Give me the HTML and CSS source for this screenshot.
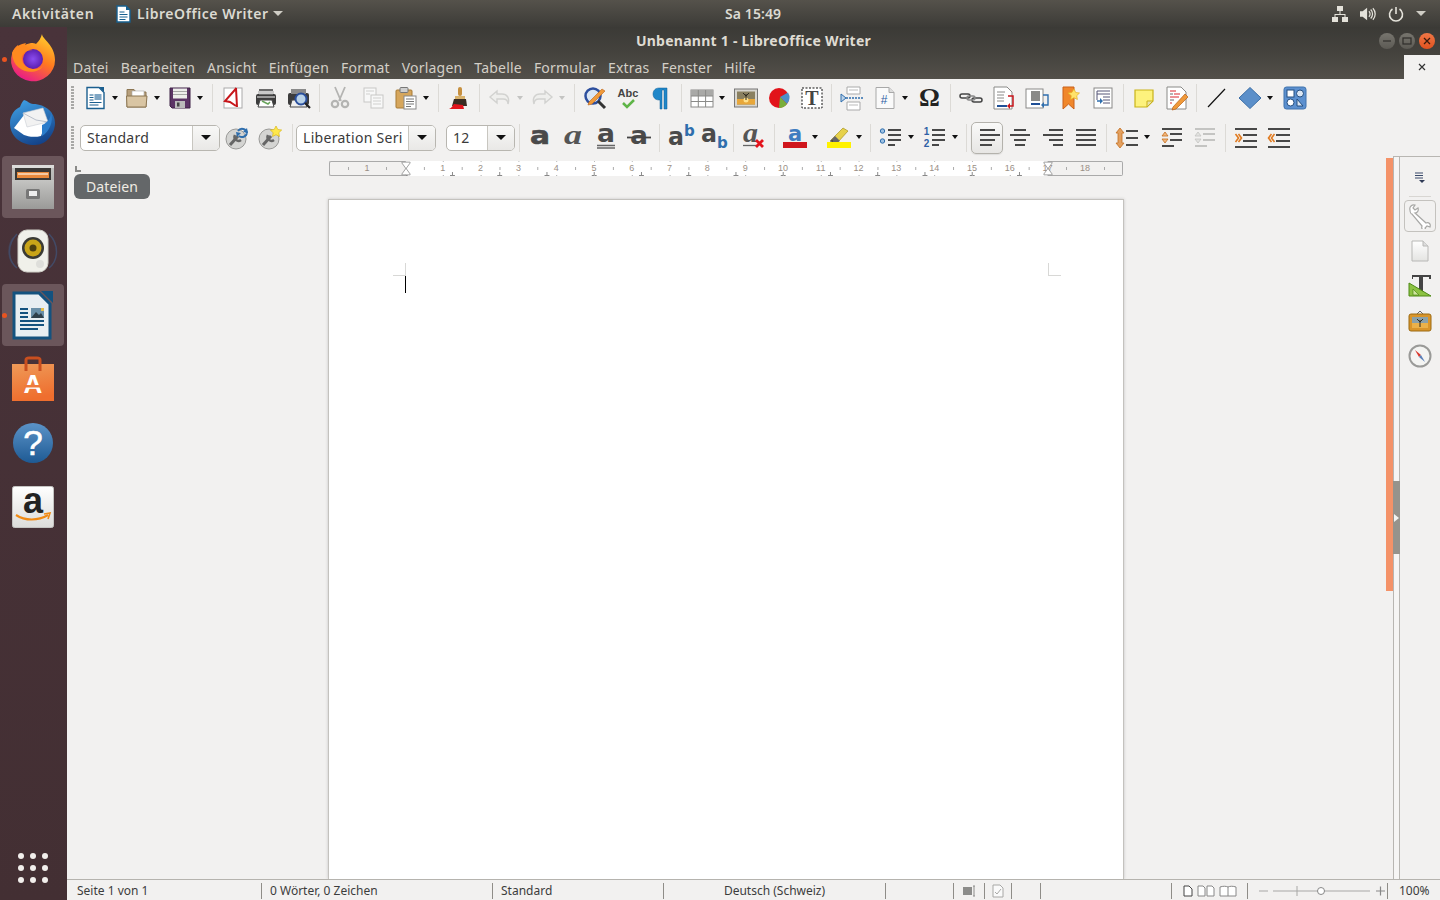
FILE: index.html
```html
<!DOCTYPE html>
<html lang="de">
<head>
<meta charset="utf-8">
<title>Unbenannt 1 - LibreOffice Writer</title>
<link rel="stylesheet" href="styles.css">
</head>
<body>
<header class="panel">
  <div class="panel-left">
    <span class="activities">Aktivitäten</span>
    <span class="appname">
      <svg width="16" height="18" viewBox="0 0 16 18"><path d="M2 1h9l4 4v12H2z" fill="#fff" stroke="#17608f" stroke-width="1.4"/><path d="M11 1v4h4z" fill="#17608f"/><path d="M4.5 7h5M4.5 9.5h8M4.5 12h8M4.5 14.500h6" stroke="#17608f"/></svg>
      LibreOffice Writer<i class="caret"></i>
    </span>
  </div>
  <div class="clock">Sa 15:49</div>
  <div class="panel-right">
    <svg width="16" height="16" viewBox="0 0 16 16" fill="#e4e2da"><rect x="5" y="0" width="6" height="5"/><rect x="0" y="11" width="6" height="5"/><rect x="10" y="11" width="6" height="5"/><path d="M7.500 5h1v3H13.500v3h-1V9h-9v2h-1V8h5z"/></svg>
    <svg width="16" height="16" viewBox="0 0 18 16"><path d="M0 5h3l5-4v14l-5-4H0z" fill="#e4e2da"/><path d="M10 5a4 4 0 0 1 0 6M12 3a7 7 0 0 1 0 10M14.500 1.500a9.500 9.500 0 0 1 0 13" fill="none" stroke="#e4e2da" stroke-width="1.400"/></svg>
    <svg width="16" height="16" viewBox="0 0 16 16" fill="none" stroke="#e4e2da" stroke-width="1.600"><path d="M8 1v7"/><path d="M4.500 3a6.500 6.500 0 1 0 7 0"/></svg>
    <i class="caret wide"></i>
  </div>
</header>

<div class="desktop">
  <nav class="dock">
    <div class="dock-item running">
      <svg class="ff" width="48" height="48" viewBox="0 0 48 48"><defs><linearGradient id="ffa" x1="0.800" y1="0" x2="0.300" y2="1"><stop offset="0" stop-color="#ffd02e"/><stop offset="0.500" stop-color="#ff7a1f"/><stop offset="1" stop-color="#e8188c"/></linearGradient><radialGradient id="ffb"><stop offset="0" stop-color="#8a4cf0"/><stop offset="1" stop-color="#5b1fae"/></radialGradient></defs><path d="M33 1c0 5 13 11 13 26a22 21 0 1 1-43-6c1-4 3-7 6-9 0 2 1 4 2 5 2-4 6-6 11-7 2 0 4 0 5 1 3-3 5-6 6-10z" fill="url(#ffa)"/><circle cx="24" cy="26" r="10" fill="url(#ffb)"/><path d="M3 20c3-7 9-9 14-10-2 3 0 6 7 7-8 0-12 4-11 10 2 9 14 12 21 6-6 10-30 8-31-13z" fill="#ff8a1f"/></svg>
    </div>
    <div class="dock-item">
      <svg width="48" height="48" viewBox="0 0 48 48"><defs><linearGradient id="tb" x1="0.300" y1="0" x2="0.700" y2="1"><stop offset="0" stop-color="#3d9be0"/><stop offset="1" stop-color="#123f86"/></linearGradient></defs><path d="M15 1c4 1 6 4 9 4 13 0 22 9 22 19S38 46 26 46C12 46 1 38 1 24 1 16 6 10 11 8c1-3 2-5 4-7z" fill="url(#tb)"/><path d="M5 29 15 16l22 8-5 13c-8 2-14 0-17-1z" fill="#fff"/><path d="M14 14 34 9l5 14-21 5z" fill="#f2f2f2" stroke="#c8ccd4" stroke-width="0.600"/><path d="m14 14 13 7 12 2" fill="none" stroke="#aab2c0" stroke-width="0.800"/><path d="M33 26c6-2 9-8 9-13 3 10-2 20-9 24z" fill="#2b7ccb"/></svg>
    </div>
    <div class="dock-item active">
      <svg width="44" height="46" viewBox="0 0 44 46"><defs><linearGradient id="fi" x1="0" y1="0" x2="0" y2="1"><stop offset="0" stop-color="#c4c4c2"/><stop offset="1" stop-color="#9a9a98"/></linearGradient></defs><rect x="1" y="1" width="42" height="44" rx="2" fill="url(#fi)"/><rect x="1" y="1" width="42" height="3" fill="#dcdcda"/><rect x="4" y="4" width="36" height="14" fill="#3a3836"/><rect x="6" y="8" width="32" height="6" fill="#e8893c"/><path d="M7 10h30" stroke="#fbe6cf" stroke-width="1.400"/><rect x="1" y="16" width="42" height="29" fill="url(#fi)"/><rect x="15" y="25" width="14" height="10" rx="1.500" fill="#777"/><rect x="18" y="27" width="8" height="5" fill="#eee"/></svg>
    </div>
    <div class="dock-item">
      <svg width="50" height="46" viewBox="0 0 50 46"><g fill="none" stroke="#41557a" stroke-width="1.500" opacity="0.700"><path d="M9 6C-1 16-1 32 9 40"/><path d="M41 6c10 10 10 26 0 34"/><path d="M5 10C-1 18 0 30 5 36" opacity="0.500"/></g><rect x="10" y="2" width="30" height="42" rx="9" fill="#f0f0ea" stroke="#cfcfc7"/><circle cx="25" cy="20" r="11" fill="#3a3a34"/><circle cx="25" cy="20" r="8.500" fill="#c9a418"/><circle cx="25" cy="20" r="3.500" fill="#4d3f0f"/><circle cx="32" cy="36" r="4" fill="#dededa"/></svg>
    </div>
    <div class="dock-item active running">
      <svg width="42" height="50" viewBox="0 0 42 50"><path d="M2 3h25l11 11v34H2z" fill="#e8eef2" stroke="#14527f" stroke-width="3"/><path d="M29 1h12v12z" fill="#14527f"/><path d="M8 19h8M8 23h8M8 27h8M8 31h24M8 35h24M8 39h18" stroke="#14527f" stroke-width="2"/><rect x="19" y="18" width="13" height="10" fill="#6a8fa8"/><path d="m19 28 5-6 3 3 2-2 3 5z" fill="#2f3f4a"/><rect x="29" y="18" width="3" height="3" fill="#e5bd4c"/></svg>
    </div>
    <div class="dock-item">
      <svg width="42" height="44" viewBox="0 0 42 44"><defs><linearGradient id="bg" x1="0" y1="0" x2="0.200" y2="1"><stop offset="0" stop-color="#ee9a58"/><stop offset="1" stop-color="#ef6e2e"/></linearGradient></defs><rect x="0" y="7" width="42" height="37" fill="url(#bg)"/><path d="M14 14V3c0-2 1-2 3-2h8c2 0 3 0 3 2v11" fill="none" stroke="#c94f1f" stroke-width="3"/><text x="21" y="36" text-anchor="middle" class="bag-a">A</text><rect x="12" y="28" width="18" height="2.500" fill="#ef7a3a"/></svg>
    </div>
    <div class="dock-item">
      <svg width="42" height="42" viewBox="0 0 42 42"><defs><linearGradient id="hp" x1="0" y1="0" x2="0" y2="1"><stop offset="0" stop-color="#5b93c8"/><stop offset="1" stop-color="#1e5a94"/></linearGradient></defs><circle cx="21" cy="21" r="20" fill="url(#hp)"/><text x="21" y="33" text-anchor="middle" class="help-q">?</text></svg>
    </div>
    <div class="dock-item">
      <svg width="42" height="42" viewBox="0 0 42 42"><defs><linearGradient id="az" x1="0" y1="0" x2="0" y2="1"><stop offset="0" stop-color="#fff"/><stop offset="1" stop-color="#dcdcda"/></linearGradient></defs><rect x="0.500" y="0.500" width="41" height="41" rx="2" fill="url(#az)" stroke="#c4c4c2"/><text x="21" y="27" text-anchor="middle" class="amazon-a">a</text><path d="M4 29c9 6 22 6 32 0" fill="none" stroke="#f08a14" stroke-width="2.200"/><path d="m32 28 6-1-2 6" fill="none" stroke="#f08a14" stroke-width="1.600"/></svg>
    </div>
    <div class="app-grid"><i></i><i></i><i></i><i></i><i></i><i></i><i></i><i></i><i></i></div>
  </nav>

  <main class="window">
    <div class="titlebar">
      <span></span>
      <span class="title">Unbenannt 1 - LibreOffice Writer</span>
      <div class="controls">
        <span class="wbtn"><svg width="10" height="10" viewBox="0 0 10 10"><path d="M1 5h8" stroke="#2f2e2a" stroke-width="1.200"/></svg></span>
        <span class="wbtn"><svg width="10" height="10" viewBox="0 0 10 10"><rect x="1" y="2" width="8" height="6" fill="none" stroke="#2f2e2a" stroke-width="1.200"/></svg></span>
        <span class="wbtn close"><svg width="10" height="10" viewBox="0 0 10 10"><path d="m2 2 6 6M8 2 2 8" stroke="#3a1a0c" stroke-width="1.300"/></svg></span>
      </div>
    </div>
    <div class="menubar">
      <span>Datei</span><span>Bearbeiten</span><span>Ansicht</span><span>Einfügen</span><span>Format</span><span>Vorlagen</span><span>Tabelle</span><span>Formular</span><span>Extras</span><span>Fenster</span><span>Hilfe</span>
      <div class="doc-close"><svg width="8" height="8" viewBox="0 0 8 8"><path d="m1 1 6 6M7 1 1 7" stroke="#333" stroke-width="1.200"/></svg></div>
    </div>

    <div class="toolbar">
      <i class="grip"></i>
      <span class="btn"><svg class="ic" viewBox="0 0 24 24"><path d="M4 1.500h12l5 5v16H4z" fill="#fff" stroke="#1b5f8f" stroke-width="1.400"/><path d="M16 1h5v5z" fill="#1b5f8f"/><path d="M6.500 9h4M6.500 11.500h4M6.500 14h4M6.500 16.500h12M6.500 19h9" stroke="#1b5f8f"/><rect x="11.500" y="8" width="7" height="6" fill="#7fa6c4"/></svg></span><i class="dd w9"></i>
      <span class="btn"><svg class="ic" viewBox="0 0 24 24"><path d="M2 6V3.500h7L11 6h10v15H2z" fill="#b79f7c" stroke="#8c7653"/><rect x="7" y="5" width="12" height="6" fill="#fff" stroke="#aaa" stroke-width="0.600"/><path d="M1.500 10H22l-1 11H2z" fill="#d9c5a3" stroke="#8c7653"/></svg></span><i class="dd"></i>
      <span class="btn"><svg class="ic" viewBox="0 0 24 24"><path d="M2 2h20v20H4l-2-2z" fill="#5c3566" stroke="#3f2347"/><rect x="5" y="2.500" width="14" height="10" fill="#eeeeec"/><path d="M5 5.500h14M5 8.500h14" stroke="#a8a8a8"/><rect x="7" y="15" width="10" height="7" fill="#bbb"/><rect x="9" y="16.500" width="2.500" height="4" fill="#444"/></svg></span><i class="dd"></i>
      <i class="sep s10"></i>
      <span class="btn"><svg class="ic" viewBox="0 0 24 24"><rect x="3" y="2" width="18" height="20" fill="#fff" stroke="#aaa"/><path d="M15.500 2 4 15l5 1 6 4M15 2l1 19" fill="none" stroke="#c7161b" stroke-width="2"/></svg></span>
      <span class="btn"><svg class="ic" viewBox="0 0 24 24"><rect x="2" y="8" width="20" height="11" rx="2" fill="#3c3c3c"/><rect x="5" y="3" width="14" height="6" fill="#6b6b6b"/><rect x="4" y="5" width="16" height="3" fill="#c8c8c8"/><rect x="3" y="10" width="18" height="2" fill="#9a9a9a"/><path d="M6 14h12l2 7H4z" fill="#fff" stroke="#444"/><path d="m8 15 6 3 2-2" stroke="#69a35b" stroke-width="1.500" fill="none"/></svg></span>
      <span class="btn"><svg class="ic" viewBox="0 0 24 24"><rect x="1" y="7" width="21" height="12" rx="2" fill="#3c3c3c"/><rect x="4" y="3" width="15" height="5" fill="#8a8a8a"/><path d="M5 14h13l2 7H3z" fill="#eee" stroke="#444"/><circle cx="14" cy="13" r="5.500" fill="#b9d2e8" stroke="#2a4f9c" stroke-width="2"/><path d="m18 17 5 5" stroke="#222" stroke-width="2.200"/></svg></span>
      <i class="sep"></i>
      <span class="btn off"><svg class="ic" viewBox="0 0 24 24" fill="none" stroke="#b4b4b2"><path d="M7 1l6 14M17 1l-6 14" stroke-width="1.800"/><circle cx="7" cy="18" r="3.200" stroke-width="2.200"/><circle cx="17" cy="18" r="3.200" stroke-width="2.200"/></svg></span>
      <span class="btn off"><svg class="ic" viewBox="0 0 24 24"><rect x="3" y="2" width="12" height="14" fill="#f8f8f8" stroke="#c8c8c6"/><rect x="10" y="9" width="12" height="13" fill="#f8f8f8" stroke="#c8c8c6"/><path d="M5 5h8M5 8h4M12 12h8M12 15h8M12 18h8" stroke="#d0d0ce"/></svg></span>
      <span class="btn"><svg class="ic" viewBox="0 0 24 24"><rect x="2" y="4" width="16" height="18" rx="1" fill="#d6a65c" stroke="#a77a34"/><rect x="6" y="1.500" width="8" height="5" rx="1" fill="#cfcfcf" stroke="#777"/><rect x="10" y="10" width="12" height="13" fill="#fff" stroke="#888"/><path d="M12 13h8M12 15.500h8M12 18h8M12 20.500h5" stroke="#777"/></svg></span><i class="dd"></i>
      <i class="sep s10"></i>
      <span class="btn"><svg class="ic" viewBox="0 0 24 24"><rect x="11" y="1" width="4" height="9" rx="2" fill="#c7903f"/><rect x="8" y="10" width="10" height="3" fill="#d9b36e"/><path d="M7 13h12l1 7H5z" fill="#3a2c22"/><path d="M2 23c3-1 4-4 5-5l9 1 1 4z" fill="#e3141c"/></svg></span>
      <i class="sep"></i>
      <span class="btn off"><svg class="ic" viewBox="0 0 24 24"><path d="M9 5 2 11l7 6v-4h6c3 0 5 2 5 5 2-6-1-10-6-10H9z" fill="#efefed" stroke="#d2d2d0" stroke-width="1.400"/></svg></span><i class="dd w9 faint"></i>
      <span class="btn off"><svg class="ic" viewBox="0 0 24 24"><path d="m15 5 7 6-7 6v-4H9c-3 0-5 2-5 5-2-6 1-10 6-10h5z" fill="#efefed" stroke="#d2d2d0" stroke-width="1.400"/></svg></span><i class="dd w9 faint"></i>
      <i class="sep s12"></i>
      <span class="btn"><svg class="ic" viewBox="0 0 24 24"><circle cx="10" cy="10" r="7.500" fill="#dbe6f3" stroke="#2d4f9e" stroke-width="2.500"/><path d="m15 15 7 7" stroke="#333" stroke-width="3"/><path d="M6 16 19 3l3 2L9 18l-4 1z" fill="#f09a3a" stroke="#b85f16" stroke-width="0.600"/></svg></span>
      <span class="btn"><svg class="ic" viewBox="0 0 24 24"><text x="12" y="11" text-anchor="middle" class="abc">Abc</text><path d="m7 17 4 4 7-7" fill="none" stroke="#5fb548" stroke-width="2.500"/></svg></span>
      <span class="btn"><svg class="ic" viewBox="0 0 24 24"><path d="M17 2H10C6 2 4 5 4 8s2 6 6 6h1v9h2V4h2v19h3V2z" fill="#1f87c9" stroke="#0e5e96" stroke-width="0.500"/></svg></span>
      <i class="sep"></i>
      <span class="btn"><svg class="ic" viewBox="0 0 24 24"><rect x="1" y="4" width="22" height="17" fill="#fff" stroke="#8a8a88"/><rect x="1" y="4" width="22" height="6" fill="#a9a9a7"/><path d="M1 10h22M1 15.500h22M8.300 4v17M15.600 4v17" stroke="#8a8a88"/></svg></span><i class="dd w11"></i>
      <span class="btn"><svg class="ic" viewBox="0 0 24 24"><rect x="0.500" y="3" width="23" height="18" fill="#d8d6d0" stroke="#777"/><rect x="3" y="5.500" width="18" height="13" fill="#8a8060"/><path d="M3 13h18v5.500H3z" fill="#e8a73a"/><circle cx="12" cy="14" r="2.500" fill="#ffe08a"/><path d="M12 14V8M12 10l-3-3M12 10l3-3" stroke="#2f2a20"/></svg></span>
      <span class="btn"><svg class="ic" viewBox="0 0 24 24"><circle cx="12" cy="12" r="10" fill="#e2141a"/><path d="M13 11 21 6.500A10 10 0 0 1 20 18z" fill="#4f8fc8"/><path d="M13 11 20 18A10 10 0 0 1 12 22z" fill="#78ae3a"/></svg></span>
      <span class="btn"><svg class="ic" viewBox="0 0 24 24"><rect x="2" y="2" width="20" height="20" fill="#fff" stroke="#111" stroke-dasharray="2 1.500"/><text x="12" y="19" text-anchor="middle" class="tbox">T</text></svg></span>
      <i class="sep s7"></i>
      <span class="btn"><svg class="ic" viewBox="0 0 24 24"><path d="M7 1h13v7H7zM7 16h13v8H7z" fill="#fff" stroke="#aaa"/><path d="M9 4h9M9 19h9" stroke="#bbb"/><path d="M6 12h17" stroke="#2f6ead" stroke-dasharray="2 1" stroke-width="1.500"/><path d="m1 8 5 4-5 4z" fill="#bcd2e8" stroke="#2f6ead"/></svg></span>
      <span class="btn"><svg class="ic" viewBox="0 0 24 24"><path d="M3 1.500h13l5 5v16H3z" fill="#fafafa" stroke="#a8a8a8"/><path d="M16 1.500v5h5" fill="#ddd" stroke="#a8a8a8"/><text x="11" y="18" text-anchor="middle" class="hash">#</text></svg></span><i class="dd w12"></i>
      <span class="btn"><span class="omega">Ω</span></span>
      <i class="sep"></i>
      <span class="btn"><svg class="ic" viewBox="0 0 24 24" fill="none" stroke="#444" stroke-width="1.500"><rect x="1" y="8" width="10" height="4" rx="2"/><rect x="13" y="12" width="10" height="4" rx="2"/><rect x="8" y="10" width="8" height="4" rx="2" stroke="#888"/></svg></span>
      <span class="btn"><svg class="ic" viewBox="0 0 24 24"><path d="M2 1h13l5 5v17H2z" fill="#fff" stroke="#8a8a88"/><path d="M5 6h8M5 9h7M5 12h7M5 15h7" stroke="#8a8a88"/><path d="M5 20h10" stroke="#1f4f96" stroke-width="2"/><path d="M16 10h5v10h-3" fill="none" stroke="#c7161b" stroke-width="1.500"/><path d="m18 17-3 3 3 3z" fill="#c7161b"/></svg></span>
      <span class="btn"><svg class="ic" viewBox="0 0 24 24"><rect x="1" y="3" width="17" height="19" fill="#fff" stroke="#8a8a88"/><rect x="6" y="5" width="9" height="10" fill="#8a8a88"/><path d="M6 18h9" stroke="#1f4f96" stroke-width="2"/><path d="M18 9h5v10h-5" fill="none" stroke="#2f6ead" stroke-width="1.400"/><path d="m19 16-3 3 3 3z" fill="#2f6ead"/></svg></span>
      <span class="btn"><svg class="ic" viewBox="0 0 24 24"><path d="M5 1h11v22l-5.500-5L5 23z" fill="#f0872b" stroke="#c9611a"/><path d="m16 3 1.700 3.500 3.800.5-2.800 2.700.7 3.800-3.400-1.800-3.400 1.800.7-3.800L10 7l3.800-.5z" fill="#ffe36a" stroke="#e5b01c" stroke-width="0.700"/></svg></span>
      <span class="btn"><svg class="ic" viewBox="0 0 24 24"><rect x="3" y="2" width="18" height="20" fill="#fff" stroke="#8a8a88"/><path d="M6 5h13M6 8h13M12 11h7M12 14h7M12 17h7M6 5v9" stroke="#557"/><path d="M6 15h5" stroke="#2f6ead" stroke-width="1.500"/><path d="m9 12 3 3-3 3z" fill="#2f6ead"/></svg></span>
      <i class="sep"></i>
      <span class="btn"><svg class="ic" viewBox="0 0 24 24"><path d="M3 4h18v11l-6 6H3z" fill="#fdf27d" stroke="#c9b31a" stroke-width="1.200"/><path d="M21 15h-6v6z" fill="#e8e1a8" stroke="#c9b31a"/></svg></span>
      <span class="btn"><svg class="ic" viewBox="0 0 24 24"><path d="M2 1h14l5 5v17H2z" fill="#fff" stroke="#8a8a88"/><path d="M5 5h6M9 8h6M5 11h9M5 17h2" stroke="#d9262c"/><path d="M5 8h3M5 14h4" stroke="#666"/><path d="M8 21 20 8l3 3-12 12-4 1z" fill="#f09a3a" stroke="#b85f16" stroke-width="0.700"/></svg></span>
      <i class="sep s7"></i>
      <span class="btn"><svg class="ic" viewBox="0 0 24 24"><path d="m3 21 17-18" stroke="#111" stroke-width="1.200"/></svg></span>
      <span class="btn"><svg class="ic" viewBox="0 0 24 24"><path d="M12 1.500 23 12 12 22.500 1 12z" fill="#5b8fc9" stroke="#3b6ea6"/></svg></span><i class="dd w12"></i>
      <span class="btn"><svg class="ic" viewBox="0 0 24 24"><rect x="1" y="1" width="22" height="22" rx="2.500" fill="#5c90cf" stroke="#3f72ad"/><rect x="4" y="4" width="7" height="7" fill="#fff" stroke="#234e80"/><circle cx="17" cy="7.500" r="3.500" fill="#dbe6f3" stroke="#234e80"/><circle cx="7.500" cy="16.500" r="3.500" fill="#fff" stroke="#234e80"/><path d="M14 20V13l6 7z" fill="#dbe6f3" stroke="#234e80"/></svg></span>
    </div>

    <div class="toolbar row2">
      <i class="grip g2"></i>
      <div class="combo c-style"><span class="combo-text">Standard</span><span class="combo-arrow"><i></i></span></div>
      <span class="btn"><svg class="ic" viewBox="0 0 24 24"><circle cx="11" cy="13" r="10" fill="#d4d4d2" stroke="#9a9a98"/><path d="m5 19 8-9" stroke="#666" stroke-width="3"/><path d="M10 9a4 4 0 0 0 6 5" stroke="#666" stroke-width="2.500" fill="none"/><path d="M13 5a5 5 0 0 1 9 2M22 7a5 5 0 0 1-8 3" fill="none" stroke="#2f6ead" stroke-width="2"/><path d="m22 2 1 5-5-1zM12 11l-1-5 5 1z" fill="#2f6ead"/></svg></span>
      <span class="btn"><svg class="ic" viewBox="0 0 24 24"><circle cx="11" cy="13" r="10" fill="#d4d4d2" stroke="#9a9a98"/><path d="m5 19 8-9" stroke="#666" stroke-width="3"/><path d="M10 9a4 4 0 0 0 6 5" stroke="#666" stroke-width="2.500" fill="none"/><path d="m18 0 1.800 3.500 3.900.5-2.900 2.700.7 3.800-3.500-1.800-3.500 1.800.7-3.800L12.300 4l3.900-.5z" fill="#ffe84a" stroke="#d9b81c" stroke-width="0.700"/></svg></span>
      <i class="sep s10"></i>
      <div class="combo c-font"><span class="combo-text">Liberation Seri</span><span class="combo-arrow"><i></i></span></div>
      <div class="combo c-size"><span class="combo-text">12</span><span class="combo-arrow"><i></i></span></div>
      <i class="sep"></i>
      <span class="btn"><svg class="ic" viewBox="0 0 24 24"><text x="2" y="18" textLength="20" lengthAdjust="spacingAndGlyphs" class="fa fa-b">a</text></svg></span>
      <span class="btn"><svg class="ic" viewBox="0 0 24 24"><text x="3" y="18" textLength="18" lengthAdjust="spacingAndGlyphs" class="fa-i">a</text></svg></span>
      <span class="btn"><svg class="ic" viewBox="0 0 24 24"><text x="3" y="16" textLength="18" lengthAdjust="spacingAndGlyphs" class="fa">a</text><path d="M3 19.500h18M3 22h18" stroke="#666" stroke-width="1.300"/></svg></span>
      <span class="btn"><svg class="ic" viewBox="0 0 24 24"><text x="3" y="18" textLength="18" lengthAdjust="spacingAndGlyphs" class="fa">a</text><path d="M0 11.500h24" stroke="#444" stroke-width="1.800"/></svg></span>
      <i class="sep"></i>
      <span class="btn"><svg class="ic" viewBox="0 0 24 24"><text x="0" y="19" textLength="16" lengthAdjust="spacingAndGlyphs" class="fa">a</text><text x="16" y="10" class="fb">b</text></svg></span>
      <span class="btn"><svg class="ic" viewBox="0 0 24 24"><text x="0" y="16" textLength="16" lengthAdjust="spacingAndGlyphs" class="fa">a</text><text x="16" y="22" class="fb">b</text></svg></span>
      <i class="sep"></i>
      <span class="btn"><svg class="ic" viewBox="0 0 24 24"><text x="1" y="16" textLength="15" lengthAdjust="spacingAndGlyphs" class="fa-i">a</text><path d="M1 19.500h14" stroke="#666" stroke-width="1.300"/><path d="m14 14 7 7M21 14l-7 7" stroke="#e3141c" stroke-width="2.800"/></svg></span>
      <i class="sep"></i>
      <span class="btn"><svg class="ic" viewBox="0 0 24 24"><text x="12" y="15" text-anchor="middle" class="fc">a</text><rect x="0" y="16" width="24" height="6" fill="#d0161c"/></svg></span><i class="dd w11"></i>
      <span class="btn"><svg class="ic" viewBox="0 0 24 24"><path d="M4 14 16 2l5 3-10 11H5z" fill="#e6d14a" stroke="#a89420" stroke-width="0.700"/><path d="M8 10l5 5-2 1H5l-1-2z" fill="#666"/><path d="M3 15h3" stroke="#333"/><rect x="0" y="16" width="24" height="6" fill="#fff200"/></svg></span><i class="dd"></i>
      <i class="sep s9"></i>
      <span class="btn"><svg class="ic" viewBox="0 0 24 24"><circle cx="3.500" cy="5" r="2.200" fill="#9cc0e2" stroke="#2f6ead"/><circle cx="3.500" cy="15" r="2.200" fill="#9cc0e2" stroke="#2f6ead"/><path d="M9 4h13M9 9h13M9 14h13M9 19h7" stroke="#484848" stroke-width="2"/></svg></span><i class="dd w11"></i>
      <span class="btn"><svg class="ic" viewBox="0 0 24 24"><text x="3.500" y="9" text-anchor="middle" class="num">1</text><text x="3.500" y="21" text-anchor="middle" class="num">2</text><path d="M9 4h13M9 9h13M9 14h13M9 19h7" stroke="#484848" stroke-width="2"/></svg></span><i class="dd"></i>
      <i class="sep s9"></i>
      <span class="btn sel"><svg class="ic" viewBox="0 0 24 24"><path d="M5 4h15M5 9h20M5 14h15M5 19h12" stroke="#484848" stroke-width="2"/></svg></span>
      <span class="btn"><svg class="ic" viewBox="0 0 24 24"><path d="M6 4h12M2 9h20M6 14h12M7 19h10" stroke="#484848" stroke-width="2"/></svg></span>
      <span class="btn"><svg class="ic" viewBox="0 0 24 24"><path d="M8 4h14M2 9h20M8 14h14M12 19h10" stroke="#484848" stroke-width="2"/></svg></span>
      <span class="btn"><svg class="ic" viewBox="0 0 24 24"><path d="M2 4h20M2 9h20M2 14h20M2 19h20" stroke="#484848" stroke-width="2"/></svg></span>
      <i class="sep"></i>
      <span class="btn"><svg class="ic" viewBox="0 0 24 24"><path d="M5 2 9 7H7v10h2l-4 5-4-5h2V7H1z" fill="#e3a05f" stroke="#c46f1f" stroke-width="0.800"/><path d="M11 5h12M11 12h12M11 19h12" stroke="#484848" stroke-width="2.200"/></svg></span><i class="dd w12"></i>
      <span class="btn"><svg class="ic" viewBox="0 0 24 24"><path d="M2 3h20M10 8h12M10 14h12M2 20h12" stroke="#484848" stroke-width="2"/><path d="m5 6 3 4H2zM5 17l3-4H2z" fill="#f4b67a" stroke="#c46f1f" stroke-width="0.800"/></svg></span>
      <span class="btn off"><svg class="ic" viewBox="0 0 24 24"><path d="M2 3h20M10 8h12M10 14h12M2 20h12" stroke="#c4c4c2" stroke-width="2"/><path d="m5 6 3 4H2zM5 17l3-4H2z" fill="#e2e2e0" stroke="#c4c4c2" stroke-width="0.800"/></svg></span>
      <i class="sep"></i>
      <span class="btn"><svg class="ic" viewBox="0 0 24 24"><path d="M1 3h22M9 9h14M9 15h14M1 21h22" stroke="#484848" stroke-width="2"/><path d="m1.500 8 3 4-3 4M4.500 8l3 4-3 4" fill="none" stroke="#e07a1f" stroke-width="1.600"/></svg></span>
      <span class="btn"><svg class="ic" viewBox="0 0 24 24"><path d="M1 3h22M9 9h14M9 15h14M1 21h22" stroke="#484848" stroke-width="2"/><path d="m4.500 8-3 4 3 4M7.500 8l-3 4 3 4" fill="none" stroke="#e07a1f" stroke-width="1.600"/></svg></span>
    </div>

    <div class="workspace">
      <section class="docarea">
        <div class="rulerrow">
          <i class="ruler-corner"></i>
          <div class="ruler">
            <div class="rside left"><span>1</span></div>
            <div class="rmid">
              <svg class="hourglass start" width="10" height="15" viewBox="0 0 11 15"><path d="M1 .5h9v1L6 7v1l4 5.500v1H1v-1L5 8V7L1 1.500z" fill="#fff" stroke="#999"/></svg>
              <span>1</span><span>2</span><span>3</span><span>4</span><span>5</span><span>6</span><span>7</span><span>8</span><span>9</span><span>10</span><span>11</span><span>12</span><span>13</span><span>14</span><span>15</span><span>16</span><span>17</span>
              <svg class="hourglass end" width="10" height="15" viewBox="0 0 11 15"><path d="M1 .5h9v1L6 7v1l4 5.500v1H1v-1L5 8V7L1 1.500z" fill="#fff" stroke="#999"/></svg>
            </div>
            <div class="rside right"><span>18</span></div>
          </div>
          <span></span>
        </div>
        <div class="page">
          <div class="margin-start">
            <i class="crop crop-l"></i>
            <i class="cursor"></i>
          </div>
          <i class="crop crop-r"></i>
        </div>
      </section>
      <div class="orange"></div>
      <div class="splitter"><div class="handle"><i></i></div></div>
      <aside class="sidebar">
        <span class="sb-menu"><svg width="14" height="14" viewBox="0 0 14 14"><path d="M2 3h8M2 5.500h8M2 8h8" stroke="#3a4a6a" stroke-width="1.200"/><path d="m6 10 6 0-3 3z" fill="#2f3a55"/></svg></span>
        <i class="sb-sep"></i>
        <span class="sb-btn sb-on"><svg width="26" height="26" viewBox="0 0 26 26"><path d="M3 7c-1-3 2-6 5-5L6 5l2 2 3-2c1 3-1 5-3 5l11 10c3-1 5 1 4 4l-3-1-2 2 1 2c-3 1-5-1-4-4L5 11C4 11 3 9 3 7z" fill="#fff" stroke="#a8a8a6" stroke-width="1.200"/></svg></span>
        <span class="sb-btn"><svg width="20" height="22" viewBox="0 0 20 22"><defs><linearGradient id="pg" x1="0" y1="0" x2="0" y2="1"><stop offset="0" stop-color="#fff"/><stop offset="1" stop-color="#e4e4e2"/></linearGradient></defs><path d="M2 1h11l5 5v15H2z" fill="url(#pg)" stroke="#b8b8b6"/><path d="M13 1v5h5" fill="#ddd" stroke="#b8b8b6"/></svg></span>
        <span class="sb-btn"><svg width="24" height="24" viewBox="0 0 24 24"><path d="M4 1h19v4h-2V3h-6v16h-4V3H5v2H4z" fill="#444"/><path d="M1 9 23 22H1z" fill="#8dc243" stroke="#4e8a16"/><path d="m5 15 6 6H5z" fill="#cfe59e" stroke="#4e8a16" stroke-width="0.700"/></svg></span>
        <span class="sb-btn"><svg width="24" height="22" viewBox="0 0 24 22"><path d="M9 4 12 1l3 3" fill="none" stroke="#666"/><rect x="1" y="4" width="22" height="17" rx="2" fill="#d9952a" stroke="#9c6a12"/><rect x="4" y="7" width="16" height="11" fill="#8aa0a8"/><rect x="4" y="13" width="16" height="5" fill="#eab14a"/><path d="M12 17v-7M12 12l-3-3M12 12l3-3" stroke="#2f2a20"/></svg></span>
        <span class="sb-btn"><svg width="24" height="24" viewBox="0 0 24 24"><circle cx="12" cy="12" r="10.500" fill="#f4f4f2" stroke="#9a9a98" stroke-width="2"/><path d="m7 6 6 5-2 2z" fill="#d9362c"/><path d="m17 18-6-5 2-2z" fill="#5b7fb8"/></svg></span>
      </aside>
    </div>

    <footer class="statusbar">
      <div class="cell s-page">Seite 1 von 1</div>
      <div class="cell s-words">0 Wörter, 0 Zeichen</div>
      <div class="cell s-style">Standard</div>
      <div class="cell s-lang">Deutsch (Schweiz)</div>
      <div class="cell s-empty1"></div>
      <div class="cell s-icon s-ins"><svg width="14" height="12" viewBox="0 0 14 12"><rect x="1" y="2" width="9" height="8" fill="#8c8c8a"/><path d="M12 1v10M11 1h2M11 11h2" stroke="#8c8c8a"/></svg></div>
      <div class="cell s-icon s-chk"><svg width="12" height="14" viewBox="0 0 12 14"><path d="M1 1h7l3 3v9H1z" fill="#fafafa" stroke="#a8a8a6"/><path d="m3 8 2 2 4-5" fill="none" stroke="#a8a8a6"/></svg></div>
      <div class="cell s-sig"></div>
      <div class="cell s-empty2"></div>
      <div class="cell s-views">
        <svg width="10" height="12" viewBox="0 0 10 12"><path d="M1 1h5l3 3v7H1z" fill="#fff" stroke="#444"/></svg>
        <svg width="18" height="12" viewBox="0 0 18 12"><path d="M1 1h5l2 2v8H1zM10 1h5l2 2v8h-7z" fill="#fff" stroke="#888"/></svg>
        <svg width="18" height="12" viewBox="0 0 18 12"><path d="M1 2c3-1 6-1 8 0 2-1 5-1 8 0v9H1z" fill="#fff" stroke="#888"/><path d="M9 2v9" stroke="#888"/></svg>
      </div>
      <div class="cell s-zoom">
        <svg width="140" height="14" viewBox="0 0 140 14"><path d="M11 7h9M25 7h97" stroke="#a8a8a6" stroke-width="1.200"/><path d="M49 2v10" stroke="#a8a8a6"/><circle cx="73" cy="7" r="3.500" fill="#fff" stroke="#888"/><path d="M128 7h9M132.500 2.500v9" stroke="#888" stroke-width="1.200"/></svg>
      </div>
      <div class="cell s-pct">100%</div>
    </footer>
  </main>
</div>

<div class="tooltip">Dateien</div>
</body>
</html>
```
FILE: styles.css
```css
* { box-sizing: border-box; }
html, body { margin: 0; height: 100%; }
body {
  width: 1440px; height: 900px; overflow: hidden; position: relative;
  display: flex; flex-direction: column;
  font-family: "Noto Sans", "Open Sans", sans-serif;
  background: #f2f1f0; color: #3c3c3c;
}
i { display: block; font-style: normal; }
svg { display: block; flex: none; }

/* top panel */
.panel {
  height: 27px; flex: none;
  display: grid; grid-template-columns: 725px auto 1fr; align-items: center;
  background: linear-gradient(#55524b, #3c3b37);
  color: #dcdad2; font-size: 14px; font-weight: 600;
}
.panel-left { display: flex; align-items: center; padding-left: 12px; }
.activities { width: 103px; letter-spacing: .6px; }
.appname { display: flex; align-items: center; gap: 6px; letter-spacing: .55px; }
.caret { width: 0; height: 0; margin-left: -2px; border: 5px solid transparent; border-top: 5px solid #cfcdc5; border-bottom: 0; }
.caret.wide { margin-left: 0; }
.clock { font-weight: 600; letter-spacing: .1px; }
.panel-right { display: flex; justify-content: flex-end; align-items: center; gap: 12px; padding-right: 14px; }

.desktop { flex: 1; display: flex; min-height: 0; }

/* dock */
.dock {
  width: 67px; flex: none; display: flex; flex-direction: column;
  background: linear-gradient(#49333a, #432f33);
  padding-bottom: 17px;
}
.dock svg { overflow: visible; }
.dock-item {
  height: 62px; margin: 1px 3px 1px 2px; flex: none; border-radius: 4px;
  display: flex; align-items: center; justify-content: center; position: relative;
}
.dock-item.active { background: #6b565b; }
.dock-item.running::before {
  content: ""; position: absolute; left: 0; top: 29px;
  width: 5px; height: 5px; border-radius: 50%; background: #e95420;
}
.ff { margin-top: -4px; }
.app-grid { margin: auto 0 0 18px; display: grid; grid-template-columns: repeat(3, 6px); gap: 6px; }
.app-grid i { width: 6px; height: 6px; border-radius: 50%; background: #f2efec; }
.bag-a { font: 700 26px "Liberation Sans", sans-serif; fill: #fff; }
.help-q { font: 400 35px "Liberation Sans", sans-serif; fill: #fff; stroke: #fff; stroke-width: .6px; }
.amazon-a { font: 700 36px "Liberation Sans", sans-serif; fill: #222; }

/* window */
.window { flex: 1; min-width: 0; display: flex; flex-direction: column; }
.titlebar {
  height: 27px; flex: none; display: grid; grid-template-columns: 1fr auto 1fr; align-items: center;
  background: linear-gradient(#3b3a36, #45433e);
  color: #dfdbd2; font-size: 14px; font-weight: 700; letter-spacing: .25px;
}
.controls { display: flex; justify-content: flex-end; gap: 4px; padding-right: 5px; }
.wbtn {
  width: 16px; height: 16px; border-radius: 50%;
  display: flex; align-items: center; justify-content: center;
  background: linear-gradient(#77756e, #5c5a54);
}
.wbtn.close { background: linear-gradient(#f07746, #e0521f); }
.menubar {
  height: 25px; flex: none; display: flex; align-items: center; gap: 12px; padding: 1px 0 0 6px;
  background: linear-gradient(#45433e, #53504a);
  color: #d3cfc7; font-size: 14px; letter-spacing: .2px;
}
.menubar span { white-space: nowrap; }
.doc-close { margin-left: auto; width: 36px; height: 24px; align-self: flex-end; background: #f2f1f0; display: flex; align-items: center; justify-content: center; }

/* toolbars */
.toolbar { height: 39px; flex: none; display: flex; align-items: center; padding: 0 0 1px 4px; }
.toolbar.row2 { padding-bottom: 0; }
.grip { width: 3px; height: 24px; margin-right: 4px; background: repeating-linear-gradient(#a8a8a6 0 2px, transparent 2px 3px); }
.grip.g2 { margin-right: 6px; }
.btn { width: 33px; height: 33px; flex: none; display: flex; align-items: center; justify-content: center; }
.btn.sel { width: 32px; height: 32px; margin-left: 1px; border: 1px solid #b4b2ac; border-radius: 5px; background: linear-gradient(#f9f9f8, #e7e6e4); box-shadow: 0 1px 1px rgba(0,0,0,.08); }
.ic { width: 24px; height: 24px; overflow: visible; }
.dd { width: 10px; height: 5px; flex: none; position: relative; }
.dd::after { content: ""; position: absolute; left: 1px; top: 0; border: 3.500px solid transparent; border-top: 4px solid #111; border-bottom: 0; }
.dd.w9 { width: 9px; }
.dd.w11 { width: 11px; }
.dd.w12 { width: 12px; }
.dd.faint::after { border-top-color: #c4c4c2; }
.sep { width: 1px; height: 28px; flex: none; margin: 0 3px 0 4px; background: #dcdad6; }
.sep.s7 { margin: 0 3px 0 3px; }
.sep.s9 { margin: 0 3px 0 5px; }
.sep.s10 { margin: 0 3px 0 6px; }
.sep.s12 { margin: 0 3px 0 7px; }

.combo {
  height: 26px; flex: none; display: flex; align-items: stretch;
  border: 1px solid #b8b6b0; border-radius: 5px; background: #fff;
  font-size: 14px; color: #3a3a3a; overflow: hidden; letter-spacing: .3px;
}
.combo-text { flex: 1; padding-left: 6px; line-height: 24px; white-space: nowrap; overflow: hidden; }
.combo-arrow { width: 27px; flex: none; border-left: 1px solid #c8c6c0; background: linear-gradient(#f8f8f7, #e9e8e6); display: flex; align-items: center; justify-content: center; }
.combo-arrow i { border: 5px solid transparent; border-top: 5px solid #111; border-bottom: 0; }
.c-style { width: 140px; }
.c-font { width: 140px; margin-right: 10px; }
.c-size { width: 69px; }

.abc { font: 700 11px "Liberation Sans", sans-serif; fill: #444; }
.tbox { font: 700 20px "Liberation Serif", serif; fill: #444; }
.hash { font: 400 12px "Liberation Sans", sans-serif; fill: #2f5fa5; }
.omega { font: 700 26px "Liberation Serif", serif; color: #222; line-height: 1; }
.fa { font: 700 24px "DejaVu Sans", sans-serif; fill: #4a4a4a; }
.fa-b { stroke: #4a4a4a; stroke-width: .6px; }
.fa-i { font: italic 700 27px "Liberation Serif", serif; fill: #555; }
.fb { font: 700 15px "DejaVu Sans", sans-serif; fill: #2f6ead; }
.fc { font: 700 21px "DejaVu Sans", sans-serif; fill: #3f7dc0; }
.num { font: 700 10px "Liberation Sans", sans-serif; fill: #2f5fa5; }

/* workspace */
.workspace { flex: 1; min-height: 0; display: flex; }
.docarea { flex: 1; min-width: 0; display: flex; flex-direction: column; padding-right: 1px; }
.rulerrow { flex: none; margin-top: 4px; height: 15px; display: grid; grid-template-columns: 1fr 794px 1fr; margin-bottom: 23px; }
.ruler-corner { width: 6px; height: 6px; margin: 5px 0 0 8px; border-left: 2px solid #8a8a88; border-bottom: 2px solid #8a8a88; }
.ruler { display: flex; font-size: 9px; color: #9a8f86; font-family: "Liberation Sans", sans-serif; }
.ruler span { width: 37.800px; flex: none; text-align: center; line-height: 15px; }
.rside { height: 15px; border: 1px solid #aaa; display: flex; background-image: linear-gradient(#aaa, #aaa), linear-gradient(#aaa, #aaa); background-repeat: no-repeat; background-size: 1px 3px; }
.rside.left { width: 76px; border-right: 0; border-radius: 2px 0 0 2px; padding-left: 18px; background-position: 18px 5px, 56px 5px; }
.rside.right { width: 75px; border-left: 0; border-radius: 0 2px 2px 0; padding-left: 18px; background-position: 18px 5px, 56px 5px; }
.rside span { line-height: 13px; }
.rmid {
  width: 643px; height: 15px; flex: none; position: relative; display: flex; padding-left: 18.900px;
  background-color: #fff;
  background-image:
    linear-gradient(90deg, #aaa 1px, transparent 1px),
    linear-gradient(90deg, #bbb 1px, transparent 1px),
    linear-gradient(90deg, #aaa 1px, transparent 1px),
    linear-gradient(90deg, transparent 2px, #888 2px, #888 3px, transparent 3px),
    linear-gradient(90deg, #888 5px, transparent 5px);
  background-repeat: repeat-x;
  background-size: 37.800px 3px, 37.800px 1px, 37.800px 1px, 47.250px 4px, 47.250px 1px;
  background-position: 18.900px 6px, 0 0, 0 14px, 45px 11px, 45px 14px;
}
.hourglass { position: absolute; top: 0; }
.hourglass.start { left: -4px; }
.hourglass.end { right: -5px; }

.page {
  width: 796px; flex: 1; margin: 0 auto; min-height: 0;
  display: flex; justify-content: space-between; align-items: flex-start;
  padding: 63px 62px 0 64px;
  background: #fff; border: 1px solid #c4c2be; border-bottom: 0;
  box-shadow: 0 0 3px rgba(0,0,0,.18);
}
.margin-start { display: flex; flex-direction: column; align-items: flex-end; }
.crop { width: 13px; height: 13px; border-bottom: 1px solid #d8d8d6; }
.crop-l { border-right: 1px solid #d8d8d6; }
.crop-r { border-left: 1px solid #d8d8d6; }
.cursor { width: 1px; height: 17px; background: #000; }

.orange { width: 7px; height: 433px; margin-top: 1px; flex: none; background: #f49268; }
.splitter { width: 7px; flex: none; margin-top: -1px; border-left: 1px solid #b8b6b2; border-right: 1px solid #b8b6b2; border-top: 1px solid #b8b6b2; background: #f6f5f4; padding-top: 324px; }
.handle { height: 73px; margin: 0 -1px; background: #96938c; display: flex; align-items: center; justify-content: center; }
.handle i { border: 4px solid transparent; border-left: 5px solid #f4f4f2; border-right: 0; }
.sidebar { width: 40px; flex: none; margin-top: -1px; border-top: 1px solid #b8b6b2; display: flex; flex-direction: column; align-items: center; padding-top: 13px; }
.sb-menu { height: 14px; margin-bottom: 12px; }
.sb-sep { width: 22px; height: 1px; background: #d8d6d2; margin-bottom: 3px; }
.sb-btn { width: 32px; height: 32px; flex: none; display: flex; align-items: center; justify-content: center; margin-bottom: 3px; }
.sb-on { border: 1px solid #c4c2be; border-radius: 4px; }

/* status bar */
.statusbar {
  height: 21px; flex: none; display: flex; align-items: center; padding-top: 1px;
  border-top: 1px solid #b5b3ae; font-size: 12px; color: #3c3c3c; background: #f2f1f0;
  white-space: nowrap;
}
.cell { height: 16px; line-height: 16px; flex: none; border-right: 1px solid #8f8d88; display: flex; align-items: center; }
.s-page { width: 195px; padding-left: 10px; }
.s-words { width: 231px; padding-left: 8px; }
.s-style { width: 171px; padding-left: 8px; }
.s-lang { width: 222px; justify-content: center; }
.s-empty1 { width: 68px; }
.s-icon { justify-content: center; }
.s-ins { width: 31px; }
.s-chk { width: 27px; }
.s-sig { width: 29px; }
.s-empty2 { width: 131px; }
.s-views { width: 76px; justify-content: center; gap: 4px; }
.s-zoom { width: 140px; }
.s-pct { border-right: 0; padding-left: 11px; }

.tooltip {
  position: absolute; left: 74px; top: 174px; width: 76px; height: 25px;
  background: #646769; border-radius: 6px; color: #f0ece4;
  font-size: 14px; line-height: 25px; text-align: center; letter-spacing: .15px;
}
```
